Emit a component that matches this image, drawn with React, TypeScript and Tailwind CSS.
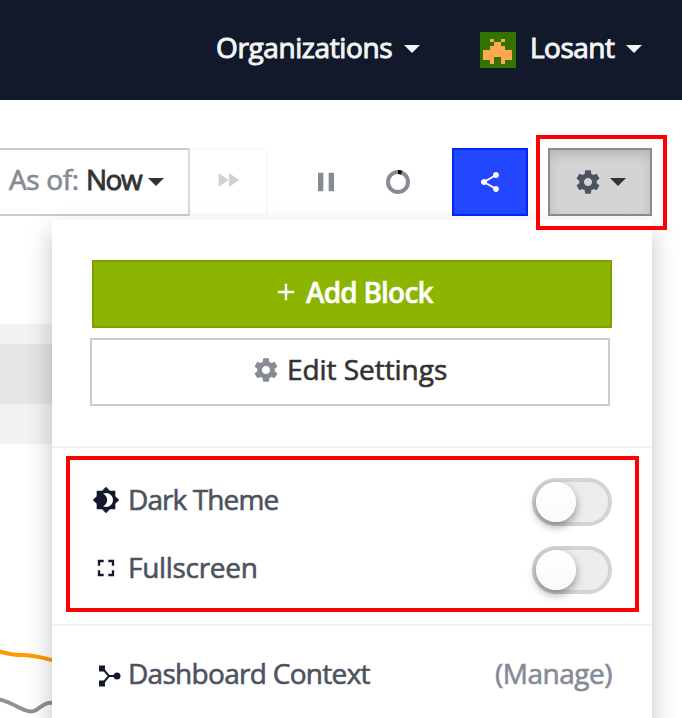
import type { ReactNode } from "react";

function Icon({ d, size, className = "" }: { d: string; size: number; className?: string }) {
  return (
    <svg viewBox="0 0 24 24" width={size} height={size} fill="currentColor" className={`shrink-0 ${className}`}>
      <path d={d} />
    </svg>
  );
}

const icons = {
  settings:
    "M19.43 12.98c.04-.32.07-.64.07-.98s-.03-.66-.07-.98l2.11-1.65c.19-.15.24-.42.12-.64l-2-3.46c-.12-.22-.39-.3-.61-.22l-2.49 1c-.52-.4-1.08-.73-1.69-.98l-.38-2.65C14.46 2.18 14.25 2 14 2h-4c-.25 0-.46.18-.49.42l-.38 2.65c-.61.25-1.17.59-1.69.98l-2.49-1c-.23-.09-.49 0-.61.22l-2 3.46c-.13.22-.07.49.12.64l2.11 1.65c-.04.32-.07.65-.07.98s.03.66.07.98l-2.11 1.65c-.19.15-.24.42-.12.64l2 3.46c.12.22.39.3.61.22l2.49-1c.52.4 1.08.73 1.69.98l.38 2.65c.03.24.24.42.49.42h4c.25 0 .46-.18.49-.42l.38-2.65c.61-.25 1.17-.59 1.69-.98l2.49 1c.23.09.49 0 .61-.22l2-3.46c.12-.22.07-.49-.12-.64l-2.11-1.65zM12 15.5c-1.93 0-3.5-1.57-3.5-3.5s1.57-3.5 3.5-3.5 3.5 1.57 3.5 3.5-1.57 3.5-3.5 3.5z",
  forward: "M4 18l8.5-6L4 6v12zm9-12v12l8.5-6L13 6z",
  pause: "M6 19h4V5H6v14zm8-14v14h4V5h-4z",
  share:
    "M18 16.08c-.76 0-1.44.3-1.96.77L8.91 12.7c.05-.23.09-.46.09-.7s-.04-.47-.09-.7l7.05-4.11c.54.5 1.25.81 2.04.81 1.66 0 3-1.34 3-3s-1.34-3-3-3-3 1.34-3 3c0 .24.04.47.09.7L8.04 9.81C7.5 9.31 6.79 9 6 9c-1.66 0-3 1.34-3 3s1.34 3 3 3c.79 0 1.5-.31 2.04-.81l7.12 4.16c-.05.21-.08.43-.08.65 0 1.61 1.31 2.92 2.92 2.92 1.61 0 2.92-1.31 2.92-2.92s-1.31-2.92-2.92-2.92z",
  add: "M19 13h-6v6h-2v-6H5v-2h6V5h2v6h6v2z",
  theme:
    "M20 8.69V4h-4.69L12 .69 8.69 4H4v4.69L.69 12 4 15.31V20h4.69L12 23.31 15.31 20H20v-4.69L23.31 12 20 8.69zM12 18c-.89 0-1.74-.2-2.5-.55C11.56 16.5 13 14.42 13 12s-1.44-4.5-3.5-5.45C10.26 6.2 11.11 6 12 6c3.31 0 6 2.69 6 6s-2.69 6-6 6z",
  fullscreen: "M7 14H5v5h5v-2H7v-3zm-2-4h2V7h3V5H5v5zm12 7h-3v2h5v-5h-2v3zM14 5v2h3v3h2V5h-5z",
};

function Caret() {
  return (
    <svg width="16" height="8" viewBox="0 0 16 8" fill="currentColor" className="shrink-0">
      <path d="M0 0h16L8 8z" />
    </svg>
  );
}

function Avatar() {
  return (
    <svg width="36" height="36" viewBox="0 0 36 36" shapeRendering="crispEdges" className="shrink-0">
      <rect width="36" height="36" fill="#327300" />
      <path
        fill="#ffa850"
        d="M10 7h4v3h-4zM21 7h4v3h-4zM14 10h7v4h-7zM10 14h15v4h-15zM3 18h29v7H3zM3 25h11v3H3zM21 25h11v3H21zM10 28h4v4h-4zM21 28h4v4h-4z"
      />
    </svg>
  );
}

function Toggle() {
  return (
    <div className="h-12 w-20 shrink-0 rounded-full border-4 border-[#d4d4d4] bg-[#ededed]">
      <div className="h-10 w-10 rounded-full bg-linear-to-t from-[#fafafa] to-white shadow-[0_4px_10px_rgba(0,0,0,0.4)]" />
    </div>
  );
}

function Row({ icon, iconBox, label, children }: { icon: ReactNode; iconBox: string; label: ReactNode; children: ReactNode }) {
  return (
    <div className="flex h-12 items-center">
      <div className={`flex w-9 ${iconBox}`}>{icon}</div>
      <div className="grow pb-[6px]">{label}</div>
      {children}
    </div>
  );
}

export default function App() {
  return (
    <div className="relative h-[718px] w-[682px] overflow-hidden whitespace-nowrap bg-white font-['Open_Sans','Noto_Sans',sans-serif] text-[28px] leading-[38px] text-[#4c5261]">
      <header className="flex h-[100px] items-center bg-[#11192b] pb-[2px] pl-[216px] text-[#f3f4f6] [-webkit-text-stroke:1px_currentColor]">
        <div className="w-[188px] pb-[5px] tracking-[-0.4px]">Organizations</div>
        <Caret />
        <div className="ml-[60px] pt-[2px]"><Avatar /></div>
        <div className="ml-[14px] w-[96px] pb-[5px] tracking-[-0.5px]">Losant</div>
        <Caret />
      </header>

      <div className="flex h-[120px] pt-12">
        <div className="flex h-[68px] w-[190px] items-center border-y-2 border-r-2 border-y-[#ccc] border-r-[#d9d9d9] pl-[9px] text-[#333]">
          <div className="w-[77px] pb-[6px] tracking-[-0.35px] text-[#868b96] [-webkit-text-stroke:0.7px_currentColor]">As of:</div>
          <div className="w-[62px] pb-[6px] tracking-[-1.5px] [-webkit-text-stroke:0.9px_currentColor]">Now</div>
          <Caret />
        </div>
        <div className="flex h-[68px] w-[78px] items-center border-y-2 border-r-2 border-[#fafafa] pb-1 pl-[24px] text-[#cfd0d5]">
          <Icon d={icons.forward} size={28} />
        </div>
        <div className="flex h-[68px] w-[184px] items-center text-[#868b96]">
          <Icon d={icons.pause} size={32} className="ml-[42px]" />
          <svg width="24" height="24" viewBox="0 0 24 24" fill="none" className="ml-11 shrink-0">
            <circle cx="12" cy="12" r="10" stroke="currentColor" strokeWidth="4" />
            <path d="M12 2a10 10 0 0 1 3.6.67" stroke="#000" strokeWidth="4" />
          </svg>
        </div>
        <div className="flex h-[68px] w-[76px] items-center justify-center border-2 border-[#0026ff] bg-[#2347ff] text-white">
          <Icon d={icons.share} size={24} />
        </div>
        <div className="ml-5 flex h-[68px] w-[104px] items-center border-2 border-[#8c8c8c] bg-[#d4d4d4] pl-6 shadow-[inset_0_6px_10px_rgba(0,0,0,0.125)]">
          <Icon d={icons.settings} size={28} />
          <div className="ml-[8px] text-[#333]"><Caret /></div>
        </div>
      </div>

      <div className="flex w-[60px] flex-col pt-[104px]">
        <div className="h-5 bg-[#f2f2f2]" />
        <div className="h-[60px] bg-[#e5e5e5]" />
        <div className="h-10 bg-[#f2f2f2]" />
        <svg width="60" height="274" viewBox="0 444 60 274" fill="none" strokeWidth="4">
          <path d="M-2 651C8 654 14 655 22 655C36 655 42 658 60 662" stroke="#ff9900" />
          <path d="M-2 699C7 701 14 705 20 708C28 712 33 713 39 708C45 704 47 701 60 704" stroke="#958f91" />
        </svg>
      </div>

      <div className="absolute left-[52px] top-[220px] h-[520px] w-[600px] bg-white shadow-[0_12px_24px_rgba(0,0,0,0.24)] [-webkit-text-stroke:0.6px_currentColor]">
        <div className="flex h-[226px] flex-col gap-[10px] px-10 pt-10">
          <button className="flex h-[68px] w-[520px] shrink-0 items-center border-2 border-[#7ca000] bg-[#8cb400] pl-[178px] text-white">
            <Icon d={icons.add} size={28} className="mb-[4px]" />
            <span className="ml-[6px] pb-[4px] font-semibold tracking-[-0.8px] [-webkit-text-stroke:0.5px_currentColor]">Add Block</span>
          </button>
          <button className="-ml-[2px] flex h-[68px] w-[520px] shrink-0 items-center border-2 border-[#ccc] pl-[160px] text-[#333]">
            <Icon d={icons.settings} size={28} className="mb-[4px] text-[#868b96]" />
            <span className="ml-[7px] pb-[6px] tracking-[-0.05px]">Edit Settings</span>
          </button>
        </div>
        <div className="flex h-[180px] flex-col gap-5 border-t-2 border-[#f2f2f2] px-10 pt-[30px]">
          <Row icon={<Icon d={icons.theme} size={28} />} iconBox="pb-[4px] text-[#11192b]" label={<span className="tracking-[-0.9px]">Dark Theme</span>}>
            <Toggle />
          </Row>
          <Row icon={<Icon d={icons.fullscreen} size={28} />} iconBox="pb-[4px] text-[#11192b]" label={<span className="tracking-[-0.3px]">Fullscreen</span>}>
            <Toggle />
          </Row>
        </div>
        <div className="-mt-[2px] border-t-2 border-[#f2f2f2] px-10 pt-[26px]">
          <Row
            iconBox="pl-[7px] text-[#11192b]"
            icon={
              <svg width="22" height="22" viewBox="0 0 22 22" fill="currentColor">
                <path d="M0 0.5h6v6H0zM0 15.5h6v6H0z" />
                <circle cx="18" cy="11" r="3.5" />
                <path d="M4 4l6 7-6 7M10 11h6" fill="none" stroke="currentColor" strokeWidth="2" />
              </svg>
            }
            label={<span className="tracking-[-0.7px]">Dashboard Context</span>}
          >
            <span className="pb-[6px] tracking-[-0.5px] text-[#868b96]">(Manage)</span>
          </Row>
        </div>
      </div>

      <div className="absolute left-[536px] top-[135px] h-[95px] w-[131px] border-4 border-[#f00]" />
      <div className="absolute left-[66px] top-[456px] h-[156px] w-[573px] border-4 border-[#f00]" />
    </div>
  );
}
